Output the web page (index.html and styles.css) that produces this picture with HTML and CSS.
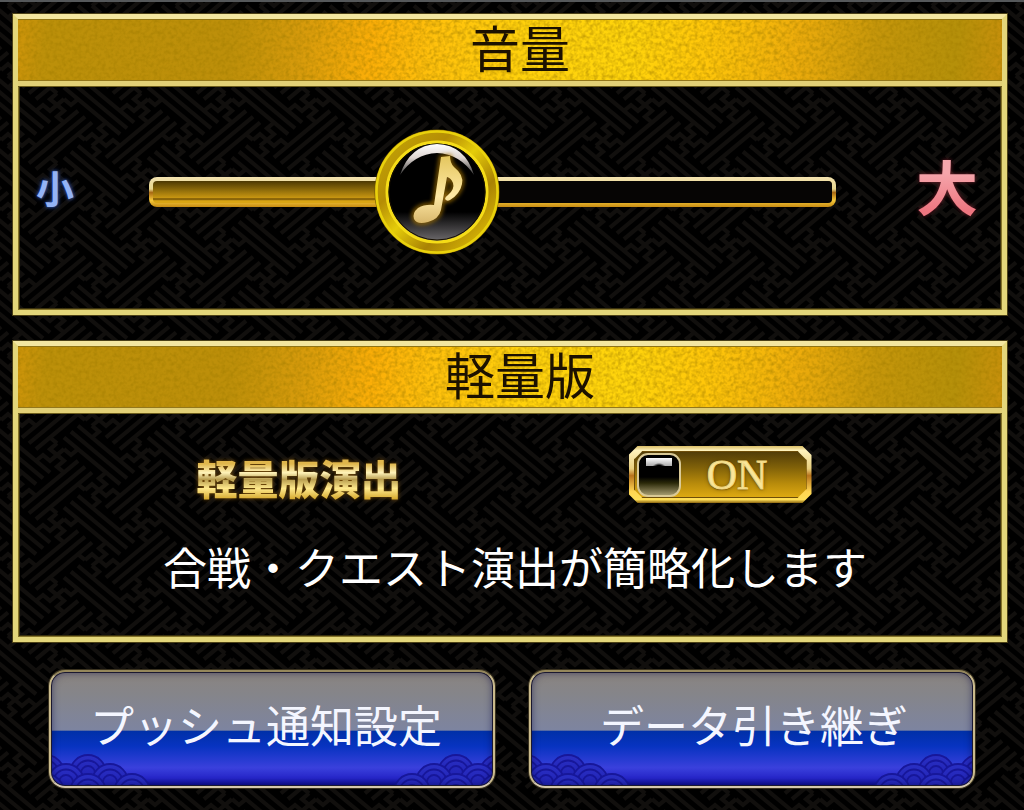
FILE: index.html
```html
<!DOCTYPE html>
<html lang="ja">
<head>
<meta charset="utf-8">
<meta name="viewport" content="width=device-width, initial-scale=1">
<title>設定</title>
<link rel="stylesheet" href="styles.css">
</head>
<body>
<main class="screen">
  <section class="panel">
    <h2 class="panel-title">音量</h2>
    <div class="volume">
      <span class="volume-min">小</span>
      <input class="volume-slider" type="range" min="0" max="100" value="40" aria-label="音量">
      <span class="volume-max">大</span>
    </div>
  </section>

  <section class="panel">
    <h2 class="panel-title">軽量版</h2>
    <div class="lite">
      <div class="lite-row">
        <span class="lite-label" id="lite-label">軽量版演出</span>
        <button class="toggle" type="button" role="switch" aria-checked="true" aria-labelledby="lite-label">
          <span class="toggle-face">
            <span class="toggle-knob"></span>
            <span class="toggle-text">ON</span>
          </span>
        </button>
      </div>
      <p class="lite-note">合戦・クエスト演出が簡略化します</p>
    </div>
  </section>

  <nav class="actions">
    <button class="action" type="button">プッシュ通知設定</button>
    <button class="action" type="button">データ引き継ぎ</button>
  </nav>
</main>
</body>
</html>
```

FILE: styles.css
```css
* {
  box-sizing: border-box;
}

body {
  margin: 0;
  min-height: 100vh;
  background-color: #000;
  /* sayagata key pattern */
  background-image: url("data:image/svg+xml,%3Csvg xmlns='http://www.w3.org/2000/svg' xmlns:xlink='http://www.w3.org/1999/xlink' width='84' height='70' viewBox='0 0 84 70'%3E%3Cdefs%3E%3Cg id='m' transform='matrix(7 5.83 7 -5.83 0 0)'%3E%3Cpath vector-effect='non-scaling-stroke' fill='none' stroke='%23110f0d' stroke-width='4' d='M-1 -1V0H1V1H2M-2 -1H-1M0 -1V1H-1V2M1 -2V-1H0M5 1V0H7V-1H8M4 1H5M6 1V-1H5V-2M6 1H7V2M2 -1V7M3 -1V7M4 -1V7M-1 -2H7M-1 -3H7M-1 -4H7'/%3E%3C/g%3E%3C/defs%3E%3Cuse href='%23m'/%3E%3Cuse href='%23m' x='84'/%3E%3Cuse href='%23m' x='-84'/%3E%3Cuse href='%23m' y='70'/%3E%3Cuse href='%23m' y='-70'/%3E%3Cuse href='%23m' x='84' y='70'/%3E%3Cuse href='%23m' x='-84' y='70'/%3E%3Cuse href='%23m' x='84' y='-70'/%3E%3Cuse href='%23m' x='-84' y='-70'/%3E%3C/svg%3E");
  background-position: 15px 0;
  font-family: "Liberation Sans", "Noto Sans CJK JP", sans-serif;
}

.screen {
  display: flex;
  flex-direction: column;
  gap: 26px;
  padding: 12px 17px 22px 13px;
  border-top: 2px solid #55585a;
}

.panel {
  border: 5px solid #e3d67a;
  border-top-color: #f3e6a0;
  box-shadow: 0 0 0 1px #4b4016, inset 0 0 0 1px #85742a, inset 0 0 0 2px #3a310e;
}

.panel-title {
  margin: 0;
  padding: 2px 0 0 20px;
  border-bottom: 5px solid #e2d076;
  background:
    url("data:image/svg+xml,%3Csvg xmlns='http://www.w3.org/2000/svg' width='300' height='80'%3E%3Cfilter id='n'%3E%3CfeTurbulence type='fractalNoise' baseFrequency='.25' numOctaves='3' stitchTiles='stitch'/%3E%3CfeColorMatrix values='0 0 0 0 .35 0 0 0 0 .2 0 0 0 0 0 1.1 0 0 0 -.4'/%3E%3C/filter%3E%3Crect width='300' height='80' filter='url(%23n)'/%3E%3C/svg%3E"),
    linear-gradient(96deg, #cf950a 0%, #bc900a 3%, #bd8f0a 22%, #d79b0c 29%, #fbae08 36%, #ffc00c 42%, #ffd20c 52%, #ffd40c 62%, #ffc60a 70%, #edac0c 79%, #c5960b 87%, #b5900a 95%, #c8900c 100%);
  box-shadow: 0 1px 0 #6b5c1c, inset 0 1px 0 #8f7417, inset 0 -1px 0 #93771b;
  color: #1c1100;
  font-size: 50px;
  font-weight: 400;
  line-height: 60px;
  text-align: center;
}

.volume {
  display: flex;
  align-items: center;
  padding: 43px 24px 55px 18px;
}

.volume-min,
.volume-max {
  flex: none;
  padding-bottom: 4px;
  font-weight: 700;
  line-height: 60px;
}

.volume-min {
  width: 113px;
  color: #94b3f5;
  font-size: 38px;
  text-shadow: 0 0 3px #2d4c9c, 0 0 5px #2d4c9c;
}

.volume-max {
  width: 142px;
  background: linear-gradient(#f5a5ab 20%, #ee7680 80%);
  -webkit-background-clip: text;
  background-clip: text;
  color: transparent;
  filter: drop-shadow(0 0 2px #7d2430);
  font-size: 62px;
  text-align: right;
}

.volume-slider {
  -webkit-appearance: none;
  appearance: none;
  flex: 1;
  min-width: 0;
  height: 126px;
  margin: 0;
  background: none;
}

.volume-slider::-webkit-slider-runnable-track {
  height: 30px;
  border: 4px solid transparent;
  border-radius: 8px;
  background:
    linear-gradient(90deg, transparent 42%, #060504 42%) padding-box,
    linear-gradient(#4c3803, #94700b 45%, #c59411 75%, #6f4f05 82%, #d9a514 90%) padding-box,
    linear-gradient(#f4e3b0, #e6d58e 40%, #a86812 52%, #f6c83a 78%, #c58a12) border-box;
}

/* round thumb carrying a note */
.volume-slider::-webkit-slider-thumb {
  -webkit-appearance: none;
  appearance: none;
  width: 126px;
  height: 126px;
  margin-top: -52px;
  border: 0;
  background: url("data:image/svg+xml,%3Csvg xmlns='http://www.w3.org/2000/svg' viewBox='0 0 126 126'%3E%3Cdefs%3E%3ClinearGradient id='r' x1='0' y1='0' x2='1' y2='1'%3E%3Cstop offset='0' stop-color='%23c4a706'/%3E%3Cstop offset='.3' stop-color='%23b58d05'/%3E%3Cstop offset='.48' stop-color='%23e5cc0a'/%3E%3Cstop offset='.7' stop-color='%23a98204'/%3E%3Cstop offset='1' stop-color='%23e8c807'/%3E%3C/linearGradient%3E%3ClinearGradient id='k' x1='0' y1='0' x2='0' y2='1'%3E%3Cstop offset='.7' stop-color='%23000'/%3E%3Cstop offset='1' stop-color='%23706d70'/%3E%3C/linearGradient%3E%3ClinearGradient id='w' x1='0' y1='0' x2='0' y2='1'%3E%3Cstop offset='0' stop-color='%23fff'/%3E%3Cstop offset='.45' stop-color='%23ddd4d0'/%3E%3Cstop offset='1' stop-color='%23333'/%3E%3C/linearGradient%3E%3ClinearGradient id='g' x1='0' y1='0' x2='0' y2='1'%3E%3Cstop offset='0' stop-color='%23e4c65e'/%3E%3Cstop offset='.6' stop-color='%23ffe9a5'/%3E%3Cstop offset='1' stop-color='%23d8b76c'/%3E%3C/linearGradient%3E%3Cfilter id='b' x='-30%25' y='-30%25' width='160%25' height='160%25'%3E%3CfeGaussianBlur stdDeviation='2'/%3E%3C/filter%3E%3C/defs%3E%3Ccircle cx='63' cy='63' r='62.5' fill='%236e5600'/%3E%3Ccircle cx='63' cy='63' r='56' fill='none' stroke='url(%23r)' stroke-width='12'/%3E%3Ccircle cx='63' cy='63' r='60.5' fill='none' stroke='%23e9d10c' stroke-width='2.5'/%3E%3Ccircle cx='63' cy='63' r='50' fill='url(%23k)' stroke='%23f5dc17' stroke-width='3'/%3E%3Ccircle cx='63' cy='63' r='48' fill='none' stroke='%23181000' stroke-width='1'/%3E%3Cpath d='M26 46Q36 16 63 15Q91 16 100 46Q86 25 63 24Q40 25 26 46Z' fill='url(%23w)'/%3E%3Cg%3E%3Cpath d='M67 28L76 27Q76 34 80 38Q90 46 88 55Q86 65 76 71Q73 73 71 70Q71 68 74 66Q81 60 79 54Q77 49 73 48L67 81Q65 90 54 93Q43 96 40 90Q38 84 44 79Q51 75 60 76Z' fill='none' stroke='%23a97608' stroke-width='3' filter='url(%23b)'/%3E%3Cpath d='M67 28L76 27Q76 34 80 38Q90 46 88 55Q86 65 76 71Q73 73 71 70Q71 68 74 66Q81 60 79 54Q77 49 73 48L67 81Q65 90 54 93Q43 96 40 90Q38 84 44 79Q51 75 60 76Z' fill='url(%23g)'/%3E%3C/g%3E%3C/svg%3E") center / contain no-repeat;
}

.lite {
  padding: 33px 0;
}

.lite-row {
  display: flex;
  align-items: center;
  justify-content: center;
  gap: 227px;
  padding-right: 12px;
}

.lite-label {
  padding-top: 12px;
  background: linear-gradient(#dfb64c 30%, #fff3b8 46%, #b89d4f 58%, #ffe98c 74%, #d8ad35 92%);
  -webkit-background-clip: text;
  background-clip: text;
  color: transparent;
  filter: drop-shadow(0 0 2px #80540a);
  font-size: 41px;
  font-weight: 900;
  line-height: 44px;
}

.toggle,
.toggle-face {
  clip-path: polygon(9px 0, calc(100% - 9px) 0, 100% 9px, 100% calc(100% - 9px), calc(100% - 9px) 100%, 9px 100%, 0 calc(100% - 9px), 0 9px);
}

.toggle {
  width: 183px;
  height: 57px;
  padding: 5px;
  border: 0;
  background: linear-gradient(#d9bd66, #fff3bd 8%, #e9cf7c 40%, #b8731c 52%, #ffd652 80%, #ffdf58 94%, #8a6410);
}

.toggle-face {
  display: flex;
  align-items: center;
  height: 100%;
  padding: 0 3px;
  background: linear-gradient(#4f3b08, #806109 35%, #b98c0b 70%, #e0ab12);
  box-shadow: inset 0 0 0 1px #6d4d09;
}

.toggle-knob {
  width: 44px;
  height: 44px;
  border: 2px solid #d9c996;
  border-radius: 11px;
  background:
    radial-gradient(ellipse 15px 12px at 50% 100%, #000 30%, transparent 50%) center 6px / 26px 8px no-repeat,
    linear-gradient(#fff, #aaa) center 3px / 26px 8px no-repeat,
    linear-gradient(#000 55%, #2a2808 70%, #a3996d);
}

.toggle-text {
  flex: 1;
  padding-right: 10px;
  color: #f9e69a;
  font-family: "Liberation Serif", serif;
  font-size: 42px;
  line-height: 46px;
  text-align: center;
  -webkit-text-stroke: 1px #f0d680;
  text-shadow: 0 1px 1px #6b4a05, 0 0 4px #553b03;
}

.lite-note {
  margin: 35px 0 0;
  padding: 0 0 2px 10px;
  color: #fff;
  font-size: 44px;
  font-weight: 400;
  line-height: 64px;
  text-align: center;
}

.actions {
  display: grid;
  grid-template-columns: 1fr 1fr;
  gap: 34px;
  padding: 2px 32px 0 36px;
}

.action {
  height: 118px;
  padding: 0 12px 2px 0;
  border: 2px solid #b5a77b;
  border-color: #95875c #c9ba8c #d5c8ad;
  border-radius: 16px;
  /* seigaiha waves in the lower corners */
  background:
    url("data:image/svg+xml,%3Csvg xmlns='http://www.w3.org/2000/svg' width='104' height='34'%3E%3Cdefs%3E%3ClinearGradient id='f' gradientUnits='userSpaceOnUse' x1='0' y1='-18' x2='0' y2='14'%3E%3Cstop offset='0' stop-color='%232a30c4'/%3E%3Cstop offset='1' stop-color='%231c1cac'/%3E%3C/linearGradient%3E%3Cg id='c' fill='none' stroke='%2317179a' stroke-width='1.8'%3E%3Ccircle r='18' fill='url(%23f)'/%3E%3Ccircle r='12.5'/%3E%3Ccircle r='7'/%3E%3C/g%3E%3C/defs%3E%3Cuse href='%23c' x='-5' y='21'/%3E%3Cuse href='%23c' x='37' y='21'/%3E%3Cuse href='%23c' x='15' y='30'/%3E%3Cuse href='%23c' x='59' y='30'/%3E%3Cuse href='%23c' x='-5' y='40'/%3E%3Cuse href='%23c' x='37' y='40'/%3E%3Cuse href='%23c' x='81' y='40'/%3E%3C/svg%3E") left bottom no-repeat,
    url("data:image/svg+xml,%3Csvg xmlns='http://www.w3.org/2000/svg' width='104' height='34'%3E%3Cdefs%3E%3ClinearGradient id='f' gradientUnits='userSpaceOnUse' x1='0' y1='-18' x2='0' y2='14'%3E%3Cstop offset='0' stop-color='%232a30c4'/%3E%3Cstop offset='1' stop-color='%231c1cac'/%3E%3C/linearGradient%3E%3Cg id='c' fill='none' stroke='%2317179a' stroke-width='1.8'%3E%3Ccircle r='18' fill='url(%23f)'/%3E%3Ccircle r='12.5'/%3E%3Ccircle r='7'/%3E%3C/g%3E%3C/defs%3E%3Cg transform='translate(104 0) scale(-1 1)'%3E%3Cuse href='%23c' x='-5' y='21'/%3E%3Cuse href='%23c' x='37' y='21'/%3E%3Cuse href='%23c' x='15' y='30'/%3E%3Cuse href='%23c' x='59' y='30'/%3E%3Cuse href='%23c' x='-5' y='40'/%3E%3Cuse href='%23c' x='37' y='40'/%3E%3Cuse href='%23c' x='81' y='40'/%3E%3C/g%3E%3C/svg%3E") right bottom no-repeat,
    linear-gradient(#8a8480, #85858a 20%, #7d84a0 51%, #0030a8 52%, #0733c0 65%, #3a40dc 84%, #2626c8 93%, #0c0c8c);
  background-origin: padding-box;
  box-shadow: 0 0 0 1px #3b3320, inset 0 0 0 1px #1a1830, inset 0 0 8px rgba(0, 0, 60, .6);
  color: #f4f6ff;
  font-family: inherit;
  font-size: 44px;
  font-weight: 400;
  line-height: 64px;
  text-align: center;
  white-space: nowrap;
}

.action:last-child {
  padding: 0 0 2px 4px;
}
```
